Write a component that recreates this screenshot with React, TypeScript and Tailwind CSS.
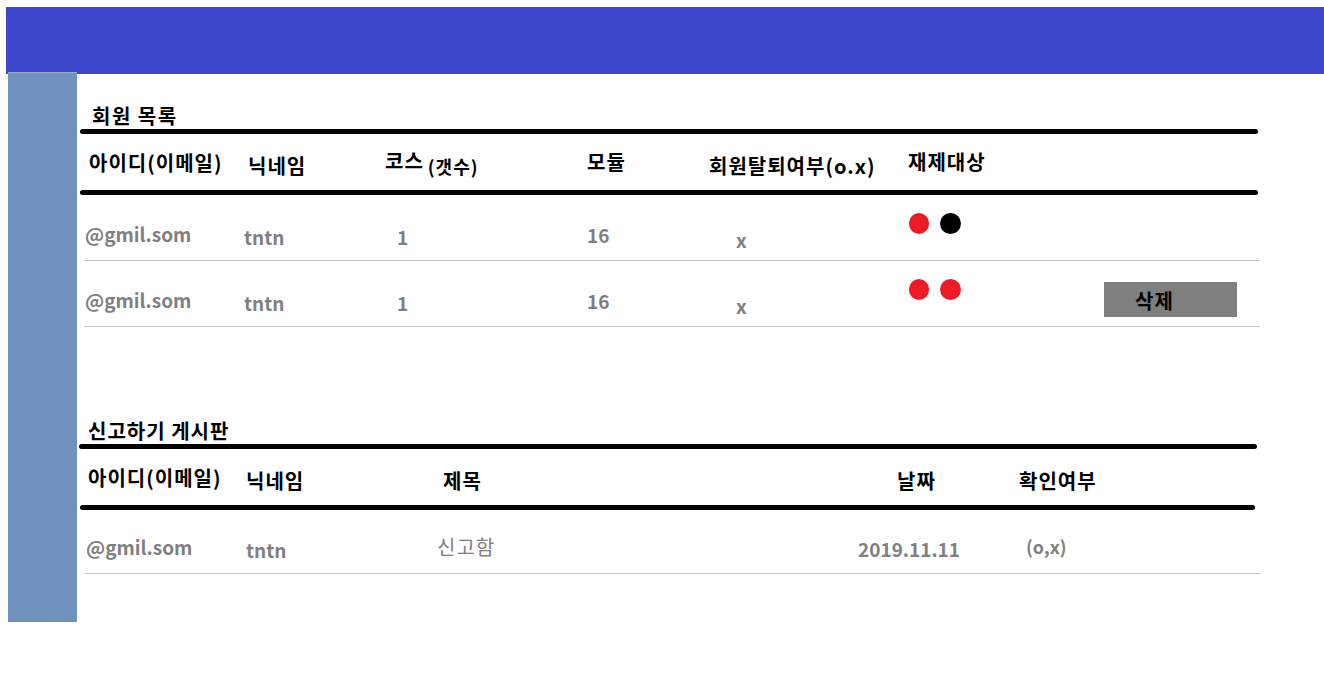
import React from "react";

const F = { fontFamily: '"Noto Sans CJK KR", "Noto Sans", sans-serif' };

function Thick({ w }: { w: string }) {
  return <div className={`h-[5px] bg-black rounded-full ${w}`} />;
}

function Dots({ second }: { second: string }) {
  return (
    <div className="flex gap-[11px]">
      <div className="w-[20px] h-[21px] rounded-full bg-[#ed1c24]" />
      <div className={`w-[21px] h-[21px] rounded-full ${second}`} />
    </div>
  );
}

function MemberRow({ dots, button }: { dots: string; button?: boolean }) {
  return (
    <div className="flex h-[66px] pl-[1px] text-[#7f7f7f] font-bold text-[19px] leading-none border-b border-[#c3c3c3] w-[1176px] ml-[4px]">
      <div className="w-[159px] pt-[29px]">@gmil.som</div>
      <div className="w-[153px] pt-[32px]">tntn</div>
      <div className="w-[190px] pt-[32px]">1</div>
      <div className="w-[149px] pt-[30px]">16</div>
      <div className="w-[173px] pt-[35px]">x</div>
      <div className="w-[195px] pt-[18px]">
        <Dots second={dots} />
      </div>
      {button && (
        <div className="mt-[21px] w-[133px] h-[35px] bg-[#7f7f7f] text-black text-[20px] tracking-[1px] pl-[31px] pt-[9px]">삭제</div>
      )}
    </div>
  );
}

export default function App() {
  return (
    <div className="w-[1324px] h-[697px] bg-white overflow-hidden" style={F}>
      <div className="mt-[7px] ml-[6px] h-[67px] bg-[#3f48cc]" />
      <div className="flex">
        <div className="ml-[8px] -mt-[2px] w-[69px] h-[550px] bg-[#7092be] border-t border-[#9aaccc]" />
        <div className="ml-[3px] flex flex-col">
          {/* Section 1 */}
          <div className="h-[55px] pl-[12px] pt-[32px] text-[20px] tracking-[1.5px] font-bold leading-none text-black">회원 목록</div>
          <Thick w="w-[1178px]" />
          <div className="flex h-[56px] pl-[9px] text-[20px] tracking-[1px] font-bold leading-none text-black">
            <div className="w-[159px] pt-[19px]">아이디(이메일)</div>
            <div className="w-[137px] pt-[22px]">닉네임</div>
            <div className="w-[202px] pt-[17px] flex items-start">
              <span>코스</span>
              <span className="text-[18px] mt-[6px] ml-[4px]">(갯수)</span>
            </div>
            <div className="w-[122px] pt-[18px]">모듈</div>
            <div className="w-[199px] pt-[22px]">회원탈퇴여부(o.x)</div>
            <div className="pt-[18px]">재제대상</div>
          </div>
          <Thick w="w-[1178px]" />
          <MemberRow dots="bg-black" />
          <MemberRow dots="bg-[#ed1c24]" button />

          {/* Section 2 */}
          <div className="h-[117px] pl-[8px] pt-[94px] text-[20px] tracking-[1px] font-bold leading-none text-black">신고하기 게시판</div>
          <div className="-ml-[1px]">
            <Thick w="w-[1178px]" />
          </div>
          <div className="flex h-[56px] pl-[8px] text-[20px] tracking-[1px] font-bold leading-none text-black">
            <div className="w-[158px] pt-[19px]">아이디(이메일)</div>
            <div className="w-[197px] pt-[22px]">닉네임</div>
            <div className="w-[454px] pt-[22px]">제목</div>
            <div className="w-[122px] pt-[22px]">날짜</div>
            <div className="pt-[22px]">확인여부</div>
          </div>
          <Thick w="w-[1175px]" />
          <div className="flex h-[64px] ml-[5px] pl-[1px] w-[1175px] border-b border-[#c3c3c3] text-[#7f7f7f] font-bold text-[19px] leading-none">
            <div className="w-[160px] pt-[27px]">@gmil.som</div>
            <div className="w-[191px] pt-[30px]">tntn</div>
            <div className="w-[421px] pt-[27px] font-normal text-[20px] tracking-[1px]">신고함</div>
            <div className="w-[168px] pt-[29px]">2019.11.11</div>
            <div className="pt-[27px] text-[18px]">(o,x)</div>
          </div>
        </div>
      </div>
    </div>
  );
}
